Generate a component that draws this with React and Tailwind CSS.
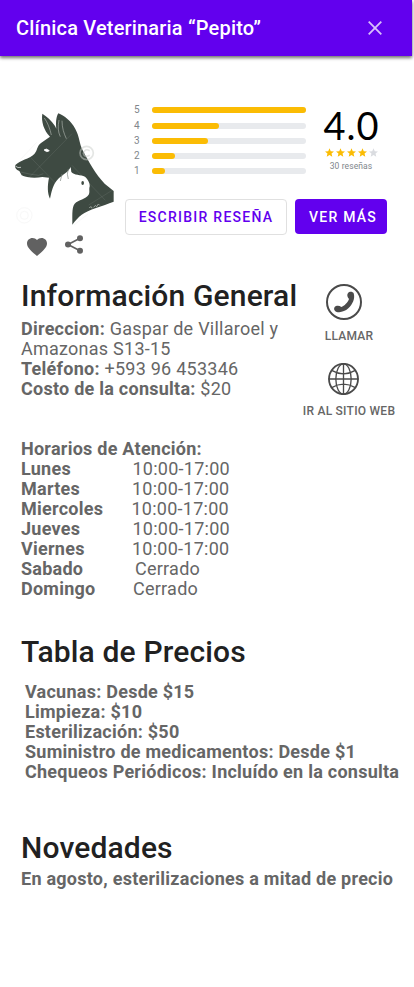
import React from "react";

const ratings = [
  { stars: 5, value: 154 },
  { stars: 4, value: 67.5 },
  { stars: 3, value: 56 },
  { stars: 2, value: 23 },
  { stars: 1, value: 13.5 },
];

const schedule = [
  ["Lunes", "10:00-17:00", "pl-[111.5px]"],
  ["Martes", "10:00-17:00", "pl-[111px]"],
  ["Miercoles", "10:00-17:00", "pl-[110.5px]"],
  ["Jueves", "10:00-17:00", "pl-[111.5px]"],
  ["Viernes", "10:00-17:00", "pl-[111px]"],
  ["Sabado", "Cerrado", "pl-[114px]"],
  ["Domingo", "Cerrado", "pl-[112px]"],
];

const prices = [
  "Vacunas: Desde $15",
  "Limpieza: $10",
  "Esterilización: $50",
  "Suministro de medicamentos: Desde $1",
  "Chequeos Periódicos: Incluído en la consulta",
];

function Logo() {
  return (
    <svg className="block h-[118px] w-[106px]" viewBox="30 60 318 354" fill="none">
      <path
        fill="#3e4a42"
        d="M127 71C139 79 155 91 165 108L169 116C167 96 169 79 175 70C192 77 214 93 226 117C238 138 238 161 248 181C264 212 288 255 314 281L341 303V335C308 348 265 359 245 374C235 382 226 391 217 404C218 388 214 351 224 341C236 328 257 328 266 314C270 307 267 300 268 293C272 285 266 270 255 260C243 254 221 256 214 246L212 231C205 247 188 254 175 266C158 283 155 304 150 326C142 309 142 288 147 263L127 261C105 265 77 263 65 256L58 243C49 240 43 232 46 225C60 211 88 207 103 192C113 181 110 169 123 159L150 140C132 122 123 94 127 71Z"
      />
      <path d="M133 84C143 98 150 116 154 135M177 90C173 110 174 126 181 140M186 92C186 114 192 131 199 146" stroke="#aab0ab" strokeWidth="2" />
      <path d="M132 180Q139 173 148 182Q141 189 132 180Z" fill="#fff" stroke="#fff" strokeWidth="2" />
      <path d="M46 228Q53 235 63 232" stroke="#fff" strokeWidth="2" />
      <path d="M62 246Q87 253 116 256L130 251" stroke="#fff" strokeOpacity=".35" strokeWidth="1" />
      <path d="M205 237Q199 253 205 267M186 252L181 273" stroke="#7c857e" strokeWidth="2" />
      <ellipse cx="248" cy="279" rx="4" ry="6" fill="#3e4a42" />
      <path d="M73 183L168 281M79 271L216 131M216 226L316 331M266 345L338 300" stroke="#fff" strokeOpacity=".12" strokeWidth="2" />
      <g stroke="#c9cdc9" strokeOpacity=".5">
        <circle cx="260" cy="189" r="20" strokeWidth="5" />
        <path d="M269 182Q255 174 250 190Q253 204 269 196" strokeWidth="5" />
      </g>
      <g stroke="#f8f8f8" strokeWidth="3">
        <circle cx="73" cy="376" r="23" />
        <circle cx="73" cy="376" r="12" />
        <path d="M62 208L110 157M222 405L264 372" />
      </g>
      <path d="M268 354Q274 345 276 355M281 352Q286 342 290 350L295 342L299 346" stroke="#aeb5af" strokeWidth="2.5" />
    </svg>
  );
}

function Star({ filled }) {
  return (
    <svg className={filled ? "size-[9px] fill-[#fbbc04]" : "size-[9px] fill-[#dadce0]"} viewBox="2 2 20 19">
      <path d="M12 17.27 18.18 21l-1.64-7.03L22 9.24l-7.19-.61L12 2 9.19 8.63 2 9.24l5.46 4.73L5.82 21z" />
    </svg>
  );
}

function PhoneIcon() {
  return (
    <svg className="block size-9" viewBox="0 0 108 108">
      <circle cx="54" cy="54" r="51" fill="none" stroke="#4a4a4a" strokeWidth="6" />
      <path
        fill="#4a4a4a"
        d="M66 27C70 22 80 22 83 28C88 43 80 61 67 73C56 83 42 87 30 83C22 79 23 69 30 66C36 64 41 65 46 69C55 66 66 55 69 45C64 39 62 33 66 27Z"
      />
    </svg>
  );
}

function GlobeIcon() {
  return (
    <svg className="block h-8 w-[31px]" viewBox="0 0 93 96" fill="none" stroke="#4a4a4a" strokeWidth="4">
      <ellipse cx="46.5" cy="48" rx="43.5" ry="45.5" strokeWidth="5.5" />
      <ellipse cx="46.5" cy="48" rx="23" ry="45.5" />
      <path d="M46.5 2V94M2 48H91M11 22Q46.5 43 82 22M11 74Q46.5 53 82 74" />
    </svg>
  );
}

export default function App() {
  return (
    <div className="h-[987px] w-[414px] overflow-hidden bg-white font-[Roboto,sans-serif] text-[18px] leading-5 tracking-[0.25px] text-[#666666]">
      <header className="flex h-14 w-[412px] items-center justify-between bg-[#6200ee] pr-[30px] pl-4 shadow-[0_1px_4px_rgba(0,0,0,0.3),0_2px_3px_rgba(0,0,0,0.4)]">
        <h1 className="text-[20px] leading-6 font-medium tracking-[0.18px] text-white">Clínica Veterinaria “Pepito”</h1>
        <svg className="size-[14px]" viewBox="0 0 14 14" fill="none" stroke="#d8c0fb" strokeWidth="1.8">
          <path d="M.7.7 13.3 13.3M13.3.7.7 13.3" />
        </svg>
      </header>

      <section className="flex h-[220px] pt-[45px] pl-2.5">
        <div className="w-[115px] shrink-0 pt-[9px]">
          <Logo />
          <div className="flex pt-[7px] pl-[17px]">
            <svg className="mt-[3px] h-[18px] w-5 fill-[#616161]" viewBox="2 3 20 18.35" preserveAspectRatio="none">
              <path d="m12 21.35-1.45-1.32C5.4 15.36 2 12.28 2 8.5 2 5.42 4.42 3 7.5 3c1.74 0 3.41.81 4.5 2.09C13.09 3.81 14.76 3 16.5 3 19.58 3 22 5.42 22 8.5c0 3.78-3.4 6.86-8.55 11.54z" />
            </svg>
            <svg className="ml-[18px] h-[19px] w-[18px]" viewBox="0 0 54 57" fill="#616161">
              <path d="M45 10 9 28.5 45 47" fill="none" stroke="#616161" strokeWidth="5" />
              <circle cx="45" cy="10" r="9" />
              <circle cx="9" cy="28.5" r="9" />
              <circle cx="45" cy="47" r="9" />
            </svg>
          </div>
        </div>
        <div className="flex w-[262px] flex-col">
          <div className="flex h-[98px] justify-between">
            <div className="flex flex-col pt-[1.6px] pl-[9px]">
              {ratings.map((r) => (
                <div key={r.stars} className="flex h-[15.3px] items-center">
                  <span className="w-[17.5px] text-[10px] leading-3 tracking-normal text-[#80868b]">{r.stars}</span>
                  <div className="h-1.5 w-[154px] rounded-full bg-[#e8eaed]">
                    <div className="h-1.5 rounded-full bg-[#fbbc04]" style={{ width: r.value }} />
                  </div>
                </div>
              ))}
            </div>
            <div className="flex w-[72px] flex-col items-center">
              <div className="mt-1 pl-px font-[Lato,sans-serif] text-[38px] leading-[40px] tracking-[1px] text-black">4.0</div>
              <div className="mt-[3px] flex gap-[2px]">
                {[1, 2, 3, 4, 5].map((n) => (
                  <Star key={n} filled={n <= 4} />
                ))}
              </div>
              <div className="mt-1 text-[8.5px] leading-[10px] tracking-[0.1px] text-[#80868b]">30 reseñas</div>
            </div>
          </div>
          <div className="flex gap-2 text-[14px] font-medium tracking-[1.25px]">
            <button className="h-9 w-[162px] rounded border border-[#e0e0e0] whitespace-nowrap text-[#6200ee]">ESCRIBIR RESEÑA</button>
            <button className="h-[35px] w-[92px] rounded bg-[#6200ee] pt-px pl-1 whitespace-nowrap text-white">VER MÁS</button>
          </div>
        </div>
      </section>

      <main className="pl-[21px]">
        <section className="flex h-[163px]">
          <div className="w-[278px] shrink-0">
            <h2 className="pt-0.5 text-[30px] leading-[36px] font-medium tracking-[0.15px] whitespace-nowrap text-[#212121]">Información General</h2>
            <p className="pt-[5px]">
              <b>Direccion:</b> Gaspar de Villaroel y<br />Amazonas S13-15<br />
              <b>Teléfono:</b> +593 96 453346<br />
              <b>Costo de la consulta:</b> $20
            </p>
          </div>
          <div className="flex w-[100px] flex-col items-center text-[12px] leading-4 font-medium tracking-[0.25px] whitespace-nowrap">
            <div className="flex flex-col items-center pt-2">
              <div className="pr-[10px]"><PhoneIcon /></div>
              <span className="pt-2">LLAMAR</span>
            </div>
            <div className="flex flex-col items-center pt-[19px]">
              <div className="pr-[10px]"><GlobeIcon /></div>
              <span className="pt-2">IR AL SITIO WEB</span>
            </div>
          </div>
        </section>

        <section className="h-[195px]">
          <h3 className="font-bold">Horarios de Atención:</h3>
          {schedule.map(([day, hours, indent]) => (
            <div key={day} className="grid h-5">
              <b className="col-start-1 row-start-1">{day}</b>
              <span className={`col-start-1 row-start-1 ${indent}`}>{hours}</span>
            </div>
          ))}
        </section>

        <section className="h-[196px]">
          <h2 className="text-[30px] leading-[36px] font-medium tracking-[0.15px] text-[#212121]">Tabla de Precios</h2>
          <ul className="pt-[12px] pl-1 font-bold whitespace-nowrap">
            {prices.map((p) => (
              <li key={p}>{p}</li>
            ))}
          </ul>
        </section>

        <section>
          <h2 className="text-[30px] leading-[36px] font-medium tracking-[0.15px] text-[#212121]">Novedades</h2>
          <p className="pt-[3px] font-bold whitespace-nowrap">En agosto, esterilizaciones a mitad de precio</p>
        </section>
      </main>
    </div>
  );
}
